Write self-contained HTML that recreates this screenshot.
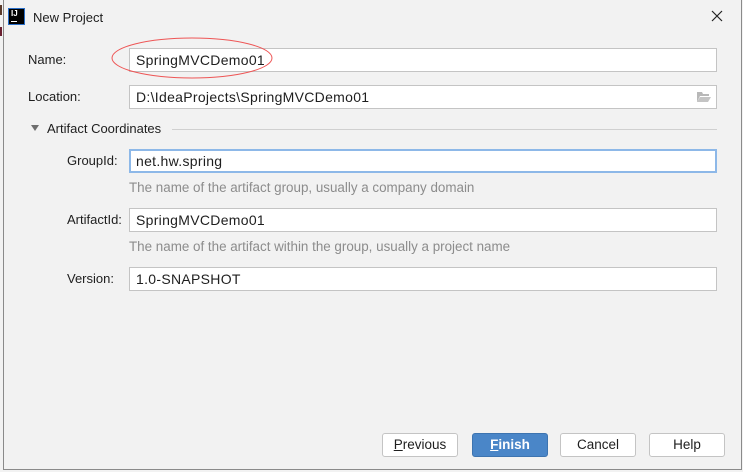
<!DOCTYPE html>
<html><head><style>
*{margin:0;padding:0;box-sizing:border-box}
body{width:743px;height:472px;background:#f2f2f2;font-family:"Liberation Sans",Arial,sans-serif;font-size:13px;color:#1e1e1e;position:relative;overflow:hidden}
.a{position:absolute}
.win{left:3px;top:0;width:739px;height:470px;border-left:1px solid #8a8a8a;border-right:1px solid #8a8a8a;border-bottom:1px solid #8a8a8a;}
.f{position:absolute;background:#fff;border:1px solid #c4c4c4;height:24px;line-height:22px;padding-left:6px;font-size:14px;letter-spacing:0.3px}
.lbl{position:absolute;line-height:14px}
.hint{position:absolute;color:#8c8c8c;line-height:14px;font-size:13.4px}
.btn{position:absolute;top:433px;height:24px;width:76px;background:#fff;border:1px solid #c4c4c4;border-radius:3px;text-align:center;line-height:22px;font-size:13.5px}
</style></head><body>
<div class="a win"></div>
<div class="a" style="left:0;top:5px;width:2px;height:10px;background:#5a3a2a"></div>
<div class="a" style="left:0;top:27px;width:2px;height:9px;background:#6a2030"></div>
<div class="a" style="left:8px;top:8px;width:17px;height:17px;background:#000;border:1px solid #2a6fc9"></div>
<div class="a" style="left:11px;top:9px;color:#fff;font-size:8px;font-weight:bold">IJ</div>
<div class="a" style="left:11px;top:21px;width:6px;height:1px;background:#fff"></div>
<div class="a" style="left:33px;top:10px;font-size:13px">New Project</div>
<svg class="a" style="left:711px;top:10px" width="12" height="12"><path d="M1 1L11 11M11 1L1 11" stroke="#222" stroke-width="1.2"/></svg>

<div class="lbl" style="left:28px;top:53px">Name:</div>
<div class="f" style="left:129px;top:48px;width:588px">SpringMVCDemo01</div>
<svg class="a" style="left:110px;top:34px" width="166" height="46"><ellipse cx="82" cy="24" rx="80" ry="20" fill="none" stroke="#e55" stroke-width="1"/></svg>

<div class="lbl" style="left:28px;top:90px">Location:</div>
<div class="f" style="left:129px;top:85px;width:588px">D:\IdeaProjects\SpringMVCDemo01</div>
<svg class="a" style="left:696px;top:90px" width="16" height="13"><path d="M1 2h5l1 2h6v2H4L1 12z" fill="#b8b8b8"/><path d="M4 7h11l-3 5H1z" fill="#c4c4c4"/></svg>

<div class="a" style="left:31px;top:125px;width:0;height:0;border-left:4.5px solid transparent;border-right:4.5px solid transparent;border-top:6px solid #6e6e6e"></div>
<div class="lbl" style="left:47px;top:122px">Artifact Coordinates</div>
<div class="a" style="left:172px;top:129px;width:545px;height:1px;background:#d0d0d0"></div>

<div class="lbl" style="left:67px;top:154px">GroupId:</div>
<div class="f" style="left:129px;top:149px;width:588px;border:2px solid #8db8e8;padding-left:5px;line-height:20px">net.hw.spring</div>
<div class="hint" style="left:129px;top:181px">The name of the artifact group, usually a company domain</div>

<div class="lbl" style="left:67px;top:213px">ArtifactId:</div>
<div class="f" style="left:129px;top:208px;width:588px">SpringMVCDemo01</div>
<div class="hint" style="left:129px;top:240px">The name of the artifact within the group, usually a project name</div>

<div class="lbl" style="left:67px;top:272px">Version:</div>
<div class="f" style="left:129px;top:267px;width:588px">1.0-SNAPSHOT</div>

<div class="btn" style="left:382px"><u>P</u>revious</div>
<div class="btn" style="left:472px;background:#4a86c8;border-color:#3d74b0;color:#fff;font-weight:bold"><u>F</u>inish</div>
<div class="btn" style="left:560px">Cancel</div>
<div class="btn" style="left:649px">Help</div>
</body></html>
